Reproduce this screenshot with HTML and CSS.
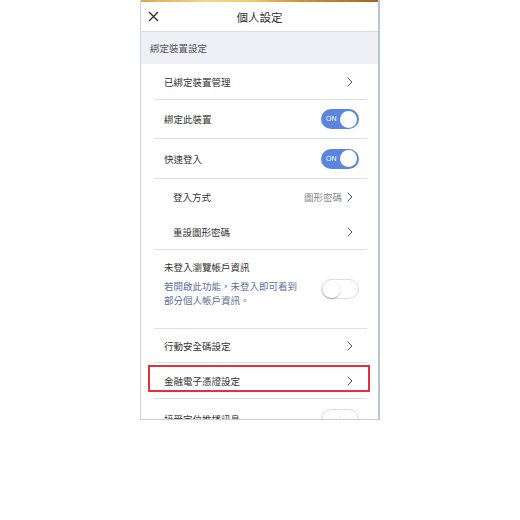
FILE: index.html
```html
<!DOCTYPE html>
<html lang="zh-Hant">
<head>
<meta charset="utf-8">
<title>個人設定</title>
<link rel="stylesheet" href="styles.css">
</head>
<body>
<div class="phone">
  <div class="topbar"></div>
  <div class="header">
    <span class="close">
      <svg width="11" height="11" viewBox="0 0 11 11"><path d="M1 1 L10 10 M10 1 L1 10" stroke="#333" stroke-width="1.4" fill="none"/></svg>
    </span>
    <span class="title">個人設定</span>
    <span></span>
  </div>
  <div class="section">綁定裝置設定</div>
  <div class="list">
    <div class="row r1"><span class="label">已綁定裝置管理</span><svg class="chev" width="6" height="10" viewBox="0 0 6 10"><path d="M0.7 0.7 L5 5 L0.7 9.3" stroke="#555" stroke-width="1" fill="none"/></svg></div>
    <div class="row r2 tg"><span class="label">綁定此裝置</span><span class="toggle on"><span class="on-txt">ON</span><span class="knob"></span></span></div>
    <div class="row r3 tg"><span class="label">快速登入</span><span class="toggle on"><span class="on-txt">ON</span><span class="knob"></span></span></div>
    <div class="row r4 sub noline"><span class="label">登入方式</span><span class="right"><span class="value">圖形密碼</span><svg class="chev" width="6" height="10" viewBox="0 0 6 10"><path d="M0.7 0.7 L5 5 L0.7 9.3" stroke="#555" stroke-width="1" fill="none"/></svg></span></div>
    <div class="row r5 sub"><span class="label">重設圖形密碼</span><svg class="chev" width="6" height="10" viewBox="0 0 6 10"><path d="M0.7 0.7 L5 5 L0.7 9.3" stroke="#555" stroke-width="1" fill="none"/></svg></div>
    <div class="row r6 tg">
      <div class="textcol">
        <div class="label">未登入瀏覽帳戶資訊</div>
        <div class="desc">若開啟此功能，未登入即可看到<br>部分個人帳戶資訊。</div>
      </div>
      <span class="toggle off"><span class="knob"></span></span>
    </div>
    <div class="row r7"><span class="label">行動安全碼設定</span><svg class="chev" width="6" height="10" viewBox="0 0 6 10"><path d="M0.7 0.7 L5 5 L0.7 9.3" stroke="#555" stroke-width="1" fill="none"/></svg></div>
    <div class="row r8 highlight"><span class="label">金融電子憑證設定</span><svg class="chev" width="6" height="10" viewBox="0 0 6 10"><path d="M0.7 0.7 L5 5 L0.7 9.3" stroke="#555" stroke-width="1" fill="none"/></svg></div>
    <div class="row r9 tg"><span class="label">接受定位推播訊息</span><span class="toggle off"><span class="knob"></span></span></div>
  </div>
</div>
</body>
</html>
```

FILE: styles.css
```css
html, body {
  margin: 0;
  padding: 0;
  background: #ffffff;
}
body {
  width: 520px;
  height: 520px;
  font-family: "Noto Sans CJK TC", "Noto Sans", sans-serif;
  color: #333;
}
.phone {
  box-sizing: border-box;
  margin-left: 140px;
  width: 240px;
  height: 420px;
  border-left: 1px solid #cfd6e1;
  border-right: 2px solid #b8c4d8;
  border-bottom: 1px solid #c5ccd8;
  overflow: hidden;
  display: flex;
  flex-direction: column;
  background: #fff;
}
.topbar {
  flex: none;
  height: 2px;
  background: linear-gradient(90deg, #d9a955 0%, #f4d685 28%, #f0cc74 45%, #c8913f 68%, #b57a2e 85%, #a0661f 100%);
}
.header {
  flex: none;
  box-sizing: border-box;
  height: 30px;
  border-bottom: 1px solid #dcdcdc;
  display: grid;
  grid-template-columns: 40px 1fr 40px;
  align-items: center;
}
.close {
  display: flex;
  padding-left: 7px;
  padding-bottom: 1px;
}
.title {
  text-align: center;
  font-size: 11.5px;
  color: #333;
  line-height: 14px;
}
.section {
  flex: none;
  height: 32px;
  background: #eef0f5;
  padding-left: 9px;
  font-size: 9.5px;
  color: #555;
  display: flex;
  align-items: center;
}
.list {
  padding: 0 11px 0 13px;
  flex: none;
}
.row {
  position: relative;
  box-sizing: border-box;
  display: flex;
  align-items: center;
  justify-content: space-between;
  border-bottom: 1px solid #e0e0e0;
  padding-left: 10px;
  padding-right: 14px;
  font-size: 9.5px;
  color: #333;
}
.row.tg {
  padding-right: 8px;
}
.row.sub {
  padding-left: 19px;
}
.row.noline {
  border-bottom: none;
}
.label {
  line-height: 12px;
}
.chev {
  display: block;
  flex: none;
}
.right {
  display: flex;
  align-items: center;
  gap: 5px;
}
.value {
  color: #888;
  line-height: 12px;
}
.r1 { height: 36px; }
.r2 { height: 39px; }
.r3 { height: 40px; }
.r4 { height: 35px; }
.r5 { height: 36px; }
.r6 {
  height: 79px;
  align-items: flex-start;
  padding-top: 11px;
}
.r6 .toggle {
  align-self: center;
  margin-top: -11px;
}
.r7 { height: 34px; }
.r8 { height: 36px; }
.r9 { height: 40px; border-bottom: none; }
.desc {
  margin-top: 6px;
  color: #5d6f9c;
  line-height: 14px;
  font-size: 9.5px;
}
.toggle {
  flex: none;
  box-sizing: border-box;
  width: 38px;
  height: 20px;
  border-radius: 10px;
  position: relative;
  display: flex;
  align-items: center;
}
.toggle.on {
  background: #5b86df;
  justify-content: space-between;
  padding: 0 2px 0 5px;
}
.toggle.off {
  background: #fff;
  border: 1px solid #dcdcdc;
  padding-left: 1px;
}
.on-txt {
  color: #fff;
  font-family: "Liberation Sans", Arial, sans-serif;
  font-size: 7px;
  line-height: 8px;
}
.knob {
  width: 17px;
  height: 17px;
  border-radius: 50%;
  background: #fff;
}
.toggle.off .knob {
  box-shadow: 0 1px 2px rgba(0,0,0,0.3);
}
.highlight::after {
  content: "";
  position: absolute;
  left: -6px;
  right: -3px;
  top: 2px;
  bottom: 6px;
  border: 2px solid #e5303c;
}
```
